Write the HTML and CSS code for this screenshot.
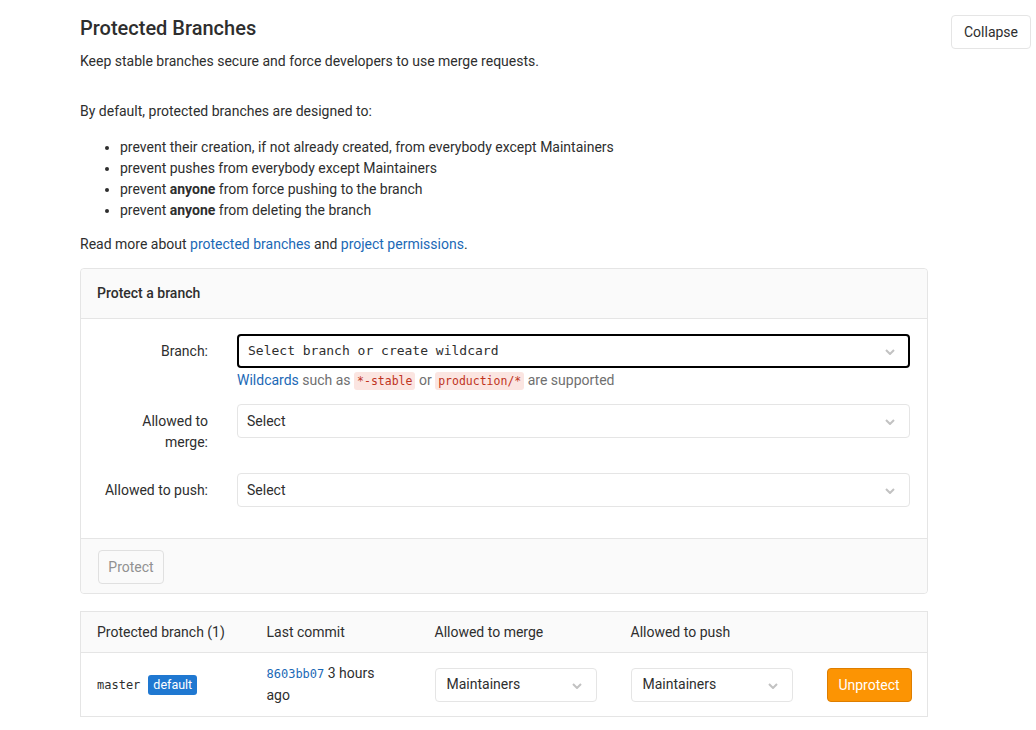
FILE: index.html
```html
<!DOCTYPE html>
<html>
<head>
<meta charset="utf-8">
<link rel="stylesheet" href="styles.css">
</head>
<body>
<div class="page">
  <section class="settings">
    <h4 class="title">Protected Branches</h4>
    <p class="desc">Keep stable branches secure and force developers to use merge requests.</p>
    <p class="lead">By default, protected branches are designed to:</p>
    <ul class="rules">
      <li>prevent their creation, if not already created, from everybody except Maintainers</li>
      <li>prevent pushes from everybody except Maintainers</li>
      <li>prevent <strong>anyone</strong> from force pushing to the branch</li>
      <li>prevent <strong>anyone</strong> from deleting the branch</li>
    </ul>
    <p class="more">Read more about <a href="#">protected branches</a> and <a href="#">project permissions</a>.</p>

    <div class="panel">
      <div class="panel-head">Protect a branch</div>
      <div class="panel-body">
        <div class="row row-branch">
          <label class="lbl">Branch:</label>
          <div class="field">
            <div class="select select-focus mono">
              <span>Select branch or create wildcard</span>
              <svg class="chev" width="10" height="6" viewBox="0 0 10 6"><polyline points="1,1 5,5 9,1" fill="none" stroke="#c2c2c2" stroke-width="2"/></svg>
            </div>
            <div class="help"><a href="#">Wildcards</a> such as <code>*-stable</code> or <code>production/*</code> are supported</div>
          </div>
        </div>
        <div class="row row-merge">
          <label class="lbl">Allowed to<br>merge:</label>
          <div class="field">
            <div class="select">
              <span>Select</span>
              <svg class="chev" width="10" height="6" viewBox="0 0 10 6"><polyline points="1,1 5,5 9,1" fill="none" stroke="#c2c2c2" stroke-width="2"/></svg>
            </div>
          </div>
        </div>
        <div class="row row-push">
          <label class="lbl">Allowed to push:</label>
          <div class="field">
            <div class="select">
              <span>Select</span>
              <svg class="chev" width="10" height="6" viewBox="0 0 10 6"><polyline points="1,1 5,5 9,1" fill="none" stroke="#c2c2c2" stroke-width="2"/></svg>
            </div>
          </div>
        </div>
      </div>
      <div class="panel-foot">
        <button class="btn btn-disabled">Protect</button>
      </div>
    </div>

    <table class="branches">
      <thead>
        <tr>
          <th class="c1">Protected branch (1)</th>
          <th class="c2">Last commit</th>
          <th class="c3">Allowed to merge</th>
          <th class="c4">Allowed to push</th>
          <th class="c5"></th>
        </tr>
      </thead>
      <tbody>
        <tr>
          <td><span class="mono ref">master</span><span class="badge">default</span></td>
          <td class="commit"><a href="#" class="mono sha">8603bb07</a> 3 hours<br>ago</td>
          <td>
            <div class="select small">
              <span>Maintainers</span>
              <svg class="chev" width="10" height="6" viewBox="0 0 10 6"><polyline points="1,1 5,5 9,1" fill="none" stroke="#c2c2c2" stroke-width="2"/></svg>
            </div>
          </td>
          <td>
            <div class="select small">
              <span>Maintainers</span>
              <svg class="chev" width="10" height="6" viewBox="0 0 10 6"><polyline points="1,1 5,5 9,1" fill="none" stroke="#c2c2c2" stroke-width="2"/></svg>
            </div>
          </td>
          <td><button class="btn btn-warning">Unprotect</button></td>
        </tr>
      </tbody>
    </table>
  </section>
  <button class="btn btn-collapse">Collapse</button>
</div>
</body>
</html>
```

FILE: styles.css
```css
* { box-sizing: border-box; }
html, body { margin: 0; padding: 0; background: #fff; }
body {
  font-family: Roboto, "Noto Sans", sans-serif;
  font-size: 14px;
  line-height: 20px;
  color: #2e2e2e;
}
a { color: #1b69b6; text-decoration: none; }
.mono { font-family: "DejaVu Sans Mono", "Liberation Mono", monospace; }

.page {
  display: flex;
  align-items: flex-start;
  padding: 0 5px 0 80px;
}
.settings { width: 848px; flex: none; }

.btn {
  font-family: inherit;
  font-size: 14px;
  line-height: 20px;
  border-radius: 4px;
  padding: 6px 10px;
  border: 1px solid #e5e5e5;
  background: #fff;
  color: #2e2e2e;
  height: 34px;
}
.btn-collapse {
  margin-left: auto;
  margin-top: 15px;
  width: 80px;
  padding: 6px 0;
}

.title {
  margin: 16px 0 0;
  font-size: 20px;
  line-height: 24px;
  font-weight: 500;
}
.desc { margin: 11px 0 0; }
.lead { margin: 30px 0 0; }
.rules {
  margin: 16px 0 0;
  padding-left: 40px;
}
.rules li { line-height: 21px; }
.rules strong { font-weight: 700; }
.more { margin: 13px 0 0; }

.panel {
  margin-top: 14px;
  border: 1px solid #e5e5e5;
  border-radius: 4px;
}
.panel-head {
  background: #fafafa;
  border-bottom: 1px solid #e5e5e5;
  padding: 14px 16px 15px;
  font-weight: 500;
  border-radius: 4px 4px 0 0;
}
.panel-body {
  padding: 15px 17px 31px 16px;
}
.row {
  display: grid;
  grid-template-columns: 111px 1fr;
  column-gap: 29px;
}
.row-branch { margin-bottom: 13px; }
.row-merge { margin-bottom: 20px; }
.lbl {
  text-align: right;
  padding-top: 7px;
  line-height: 21px;
}
.select {
  position: relative;
  display: flex;
  align-items: center;
  height: 34px;
  border: 1px solid #e5e5e5;
  border-radius: 4px;
  padding: 0 10px 0 9px;
  background: #fff;
}
.select .chev {
  position: absolute;
  right: 14px;
  top: 14px;
}
.select-focus {
  border: 2px solid #000;
  padding-left: 9px;
  font-size: 13px;
}
.select-focus .chev { right: 13px; top: 13px; }
.help {
  margin-top: 2px;
  color: #707070;
}
code {
  font-family: "DejaVu Sans Mono", "Liberation Mono", monospace;
  font-size: 11.5px;
  color: #c0341d;
  background: #fbe5e1;
  border-radius: 3px;
  padding: 2px 3px;
}

.panel-foot {
  background: #fafafa;
  border-top: 1px solid #e5e5e5;
  padding: 11px 16px 9px 17px;
  border-radius: 0 0 4px 4px;
}
.btn-disabled {
  color: #919191;
  background: #fafafa;
  border-color: #e0e0e0;
  width: 66px;
  padding: 6px 0;
}

.branches {
  margin-top: 17px;
  width: 848px;
  border-collapse: collapse;
  border: 1px solid #e5e5e5;
  table-layout: fixed;
}
.branches th {
  background: #fafafa;
  font-weight: 400;
  text-align: left;
  padding: 10px 16px;
  border-bottom: 1px solid #e5e5e5;
}
.branches .c1 { width: 170px; }
.branches .c2 { width: 168px; }
.branches .c3 { width: 196px; }
.branches .c4 { width: 196px; }
.branches td {
  padding: 14px 16px;
  vertical-align: middle;
  line-height: 21px;
}
.branches td.commit { padding-top: 10px; padding-bottom: 10px; }
.ref { font-size: 12px; }
.sha { font-size: 12px; line-height: 21px; }
.badge {
  display: inline-block;
  margin-left: 8px;
  background: #1f78d1;
  color: #fff;
  font-size: 12.5px;
  line-height: 20px;
  padding: 0 5px;
  border-radius: 3px;
  vertical-align: 0;
}
.select.small {
  width: 162px;
  padding-left: 11px;
}
.btn-warning {
  background: #fc9403;
  border-color: #de7e00;
  color: #fff;
  width: 85px;
  padding: 6px 0;
}
```
